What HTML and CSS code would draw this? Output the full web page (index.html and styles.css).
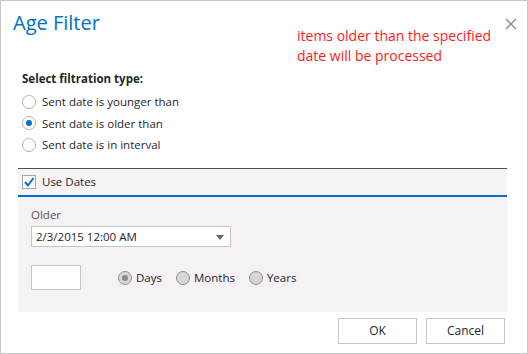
FILE: index.html
```html
<!DOCTYPE html>
<html lang="en">
<head>
    <meta charset="UTF-8">
    <title>Age Filter</title>
    <link rel="stylesheet" href="styles.css">
</head>
<body>
    <div class="dialog">
        <div class="header">
            <h1>Age Filter</h1>
            <p class="note">items older than the specified date will be processed</p>
            <button class="close" title="Close">
                <svg width="12" height="12" viewBox="0 0 12 12">
                    <path d="M1 1 L11 11 M11 1 L1 11" stroke="#8a8a8a" stroke-width="1.3" fill="none"/>
                </svg>
            </button>
        </div>

        <div class="filter-type">
            <div class="label">Select filtration type:</div>
            <label class="radio-row"><span class="radio"></span>Sent date is younger than</label>
            <label class="radio-row"><span class="radio checked"></span>Sent date is older than</label>
            <label class="radio-row"><span class="radio"></span>Sent date is in interval</label>
        </div>

        <div class="use-dates">
            <span class="checkbox">
                <svg width="12" height="12" viewBox="0 0 12 12">
                    <path d="M2 6 L5 9.5 L10.5 2" stroke="#0072c6" stroke-width="2" fill="none"/>
                </svg>
            </span>
            Use Dates
        </div>

        <div class="panel">
            <div class="field-label">Older</div>
            <div class="select">
                <span>2/3/2015 12:00 AM</span>
                <span class="arrow"></span>
            </div>
            <div class="period">
                <div class="number"></div>
                <label class="unit"><span class="radio gray checked"></span>Days</label>
                <label class="unit"><span class="radio gray"></span>Months</label>
                <label class="unit"><span class="radio gray"></span>Years</label>
            </div>
        </div>

        <div class="footer">
            <button class="btn">OK</button>
            <button class="btn">Cancel</button>
        </div>
    </div>
</body>
</html>
```

FILE: styles.css
```css
* {
    margin: 0;
    padding: 0;
    box-sizing: border-box;
}

body {
    font-family: 'Open Sans', 'Noto Sans', sans-serif;
    font-size: 11.5px;
    color: #262626;
    background: #fff;
}

.dialog {
    width: 528px;
    height: 354px;
    border: 1px solid #c6c6c6;
    background: #fff;
    display: flex;
    flex-direction: column;
}

.header {
    display: flex;
    align-items: flex-start;
    height: 69px;
    padding: 8px 8px 0 12px;
}

.header h1 {
    font-size: 20px;
    font-weight: 400;
    color: #0072c6;
    line-height: 28px;
}

.note {
    margin-left: auto;
    margin-top: 17px;
    width: 202px;
    font-size: 14px;
    line-height: 20px;
    color: #ff1a1a;
}

.close {
    border: none;
    background: none;
    margin-top: 7px;
    margin-left: 4px;
    width: 16px;
    height: 16px;
    display: flex;
    align-items: center;
    justify-content: center;
}

.filter-type {
    padding-left: 21px;
}

.label {
    font-weight: 700;
    line-height: 18px;
    margin-bottom: 3px;
}

.radio-row {
    display: flex;
    align-items: center;
    gap: 6px;
    height: 21.5px;
}

.radio {
    width: 14px;
    height: 14px;
    border: 1px solid #b3b3b3;
    border-radius: 50%;
    background: #fff;
    display: flex;
    align-items: center;
    justify-content: center;
    flex-shrink: 0;
}

.radio.checked::after {
    content: "";
    width: 6px;
    height: 6px;
    border-radius: 50%;
    background: #0072c6;
}

.radio.gray {
    background: #d8d6d4;
    border-color: #8f8f8f;
}

.radio.gray.checked::after {
    background: #8a8a8a;
}

.use-dates {
    margin: 12px 20px 0 17px;
    height: 29px;
    border-top: 1px solid #4c4c5a;
    border-bottom: 2px solid #0072c6;
    background: #f7f3f7;
    display: flex;
    align-items: center;
    gap: 6px;
    padding-left: 4px;
}

.checkbox {
    width: 14px;
    height: 14px;
    border: 1px solid #a6a6a6;
    background: #fff;
    display: flex;
    align-items: center;
    justify-content: center;
}

.panel {
    margin: 0 20px 0 17px;
    height: 115px;
    background: #f5f1f5;
    padding: 9px 13px 0;
}

.field-label {
    color: #555;
    line-height: 18px;
    margin-bottom: 2px;
}

.select {
    width: 200px;
    height: 21px;
    border: 1px solid #c6c6c6;
    background: #fff;
    display: flex;
    align-items: center;
    justify-content: space-between;
    padding: 0 6px 0 4px;
}

.arrow {
    width: 0;
    height: 0;
    border-left: 4px solid transparent;
    border-right: 4px solid transparent;
    border-top: 5px solid #666;
    margin-top: 2px;
}

.period {
    display: flex;
    align-items: center;
    margin-top: 18px;
}

.number {
    width: 50px;
    height: 25px;
    border: 1px solid #c6c6c6;
    background: #fff;
    margin-right: 37px;
}

.unit {
    display: flex;
    align-items: center;
    gap: 4px;
    margin-right: 14px;
    margin-top: 1px;
}

.footer {
    display: flex;
    justify-content: flex-end;
    gap: 9px;
    padding: 6px 22px 0 0;
}

.btn {
    width: 79px;
    height: 26px;
    border: 1px solid #c6c6c6;
    background: #fff;
    font-family: inherit;
    font-size: 12px;
    color: #262626;
}
```
